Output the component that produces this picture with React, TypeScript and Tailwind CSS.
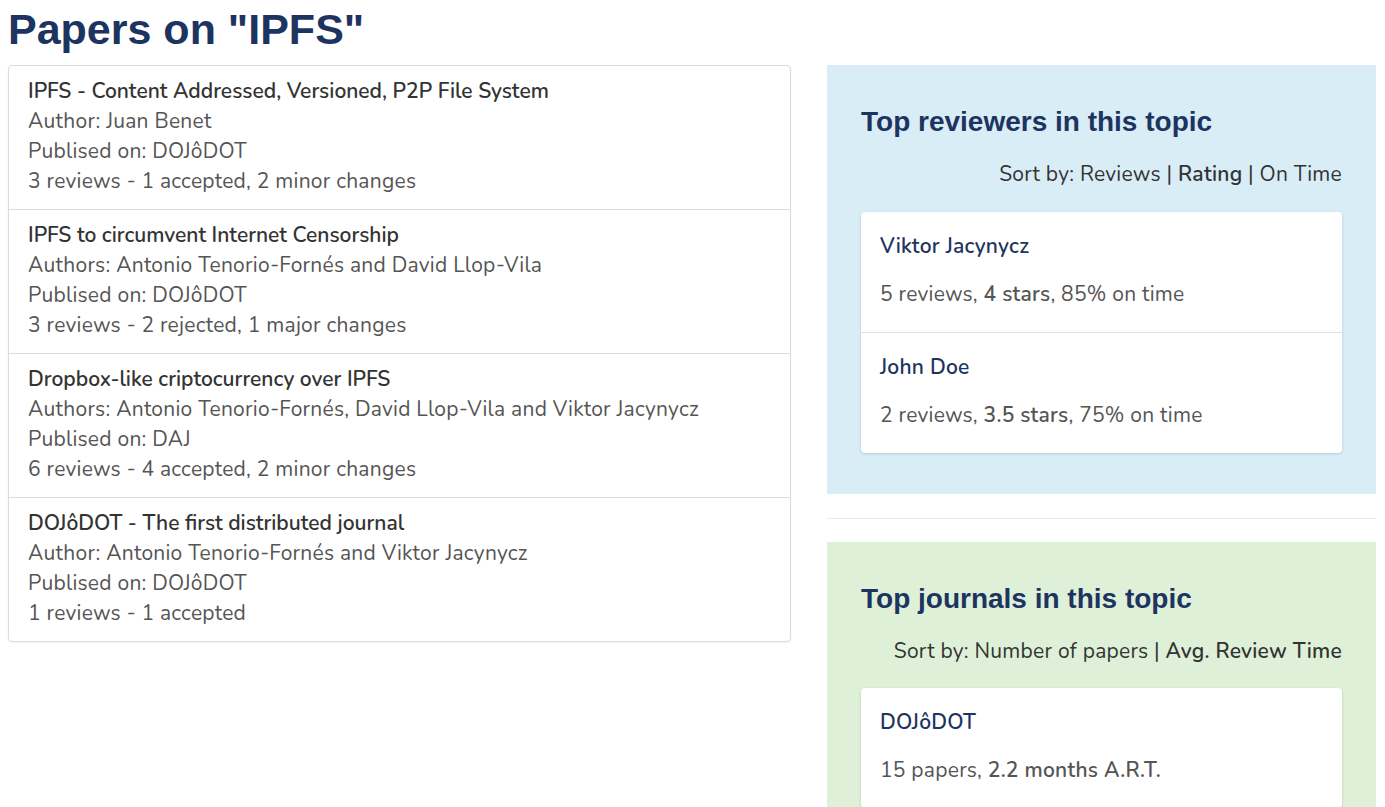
const papers = [
  {
    title: 'IPFS - Content Addressed, Versioned, P2P File System',
    authors: 'Author: Juan Benet',
    journal: 'DOJôDOT',
    reviews: '3 reviews - 1 accepted, 2 minor changes',
  },
  {
    title: 'IPFS to circumvent Internet Censorship',
    authors: 'Authors: Antonio Tenorio-Fornés and David Llop-Vila',
    journal: 'DOJôDOT',
    reviews: '3 reviews - 2 rejected, 1 major changes',
  },
  {
    title: 'Dropbox-like criptocurrency over IPFS',
    authors: 'Authors: Antonio Tenorio-Fornés, David Llop-Vila and Viktor Jacynycz',
    journal: 'DAJ',
    reviews: '6 reviews - 4 accepted, 2 minor changes',
  },
  {
    title: 'DOJôDOT - The first distributed journal',
    authors: 'Author: Antonio Tenorio-Fornés and Viktor Jacynycz',
    journal: 'DOJôDOT',
    reviews: '1 reviews - 1 accepted',
  },
];

const reviewers = [
  { name: 'Viktor Jacynycz', reviews: 5, stars: '4 stars', onTime: '85%' },
  { name: 'John Doe', reviews: 2, stars: '3.5 stars', onTime: '75%' },
];

const body = "font-['Nunito','Lato','Noto_Sans',sans-serif]";
const heading = "font-['Liberation_Sans',Arial,sans-serif] font-bold text-[#1d3461] tracking-normal";

export default function App() {
  return (
    <div className={`${body} bg-white min-h-screen pl-2 pr-[9px] text-[21px] tracking-[0.25px] leading-[30px] text-[#555]`}>
      <h1 className={`${heading} text-[43px] leading-[56px] pt-[1px] mb-[8px]`}>Papers on "IPFS"</h1>

      <div className="flex gap-[36px] items-start">
        <div className="flex-1 border border-[#dcdcdc] rounded-[4px] shadow-[0_1px_2px_rgba(0,0,0,0.06)]">
          {papers.map((p, i) => (
            <div
              key={i}
              className={`px-[19px] pt-[10px] pb-[13px] ${i < papers.length - 1 ? 'border-b border-[#dcdcdc]' : ''}`}
            >
              <div className="text-[#333] font-semibold tracking-normal">{p.title}</div>
              <div>{p.authors}</div>
              <div>Publised on: {p.journal}</div>
              <div>{p.reviews}</div>
            </div>
          ))}
        </div>

        <div className="w-[549px] shrink-0">
          <section className="bg-[#d9edf7] px-[34px] pt-[40px] pb-[41px]">
            <h2 className={`${heading} text-[28px] leading-[34px]`}>Top reviewers in this topic</h2>
            <div className="text-right text-[#333] mt-[20px] mb-[23px]">
              Sort by: Reviews | <span className="font-semibold">Rating</span> | On Time
            </div>
            <div className="bg-white rounded-[4px] shadow-[0_1px_3px_rgba(0,0,0,0.15)]">
              {reviewers.map((r, i) => (
                <div
                  key={r.name}
                  className={`px-[19px] pt-[19px] pb-[23px] ${i < reviewers.length - 1 ? 'border-b border-[#e2e2e2]' : ''}`}
                >
                  <div className="text-[#1d3461] font-semibold mb-[18px]">{r.name}</div>
                  <div>
                    {r.reviews} reviews, <span className="font-semibold">{r.stars}</span>, {r.onTime} on time
                  </div>
                </div>
              ))}
            </div>
          </section>

          <hr className="mt-6 mb-[23px] border-t border-[#eaeaea]" />

          <section className="bg-[#dff0d8] px-[34px] pt-[40px] pb-[41px]">
            <h2 className={`${heading} text-[28px] leading-[34px]`}>Top journals in this topic</h2>
            <div className="text-right text-[#333] mt-[20px] mb-[22px]">
              Sort by: Number of papers | <span className="font-semibold">Avg. Review Time</span>
            </div>
            <div className="bg-white rounded-[4px] shadow-[0_1px_3px_rgba(0,0,0,0.15)]">
              <div className="px-[19px] pt-[19px] pb-[23px]">
                <div className="text-[#1d3461] font-semibold mb-[18px]">DOJôDOT</div>
                <div>
                  15 papers, <span className="font-semibold">2.2 months A.R.T.</span>
                </div>
              </div>
            </div>
          </section>
        </div>
      </div>
    </div>
  );
}
